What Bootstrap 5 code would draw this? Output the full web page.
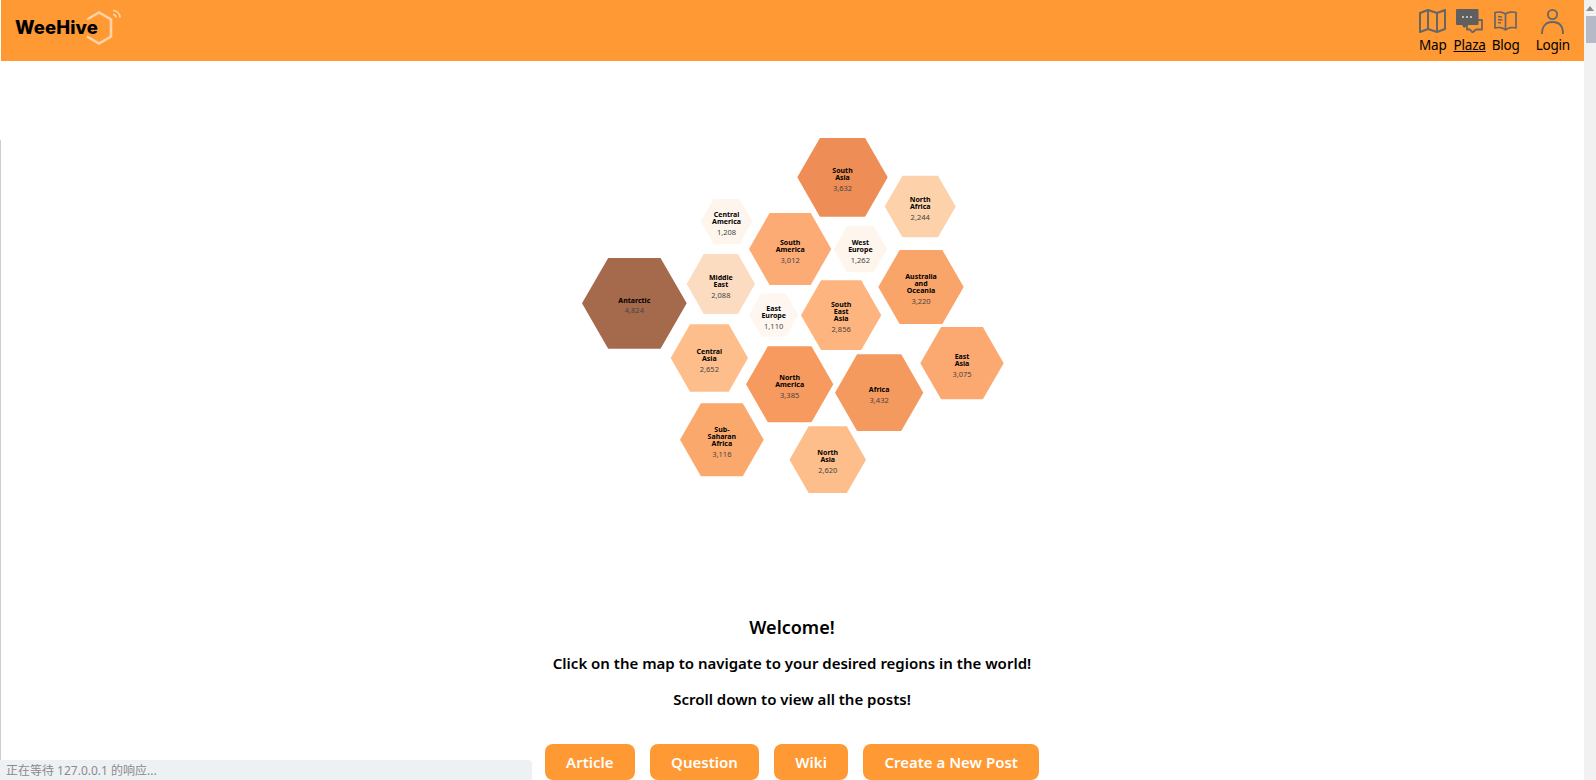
<!DOCTYPE html>
<html lang="en">
  <head>
    <meta charset="UTF-8" />
    <meta name="viewport" content="width=device-width, initial-scale=1.0" />
    <title>WeeHive</title>
    <link href="https://cdn.jsdelivr.net/npm/bootstrap@5.3.0/dist/css/bootstrap.min.css" rel="stylesheet" />
    <style>
      html,
      body {
        height: 100%;
        overflow: hidden;
      }
      body {
        padding-right: 12px;
        font-family: "Noto Sans", sans-serif;
        color: #000;
        background: #fff;
      }
      .top-bar {
        height: 61px;
        background: #ff9933;
        margin-left: 1px;
        padding: 0 14px 0 15px;
      }
      .brand-mark {
        position: relative;
        width: 105px;
        height: 40px;
        margin-top: 8px;
        color: #000;
        text-decoration: none;
      }
      .brand-mark svg {
        position: absolute;
        left: 67px;
        top: 0;
      }
      .brand-name {
        position: absolute;
        left: -1px;
        top: 7px;
        font-family: Inter, sans-serif;
        font-weight: 800;
        font-size: 18.5px;
        line-height: 25px;
        letter-spacing: 0.1px;
      }
      .top-links {
        gap: 7px;
        padding-top: 9px;
      }
      .top-link {
        color: #000;
        text-decoration: none;
        font-size: 13.5px;
        line-height: 19px;
        letter-spacing: -0.2px;
      }
      .top-link svg {
        display: block;
      }
      .top-link.current {
        margin-right: -1px;
      }
      .top-link.current span {
        text-decoration: underline;
      }
      .login-link {
        margin-left: 9px;
      }
      .icon-box {
        height: 27px;
      }
      .hex-map {
        display: block;
        margin: 69px auto 0;
      }
      .hex-name {
        font-family: "Noto Sans", sans-serif;
        font-weight: 700;
        font-size: 7px;
        fill: #000;
        text-anchor: middle;
      }
      .hex-count {
        font-family: "Noto Sans", sans-serif;
        font-size: 7.5px;
        fill: #444;
        text-anchor: middle;
      }
      .intro-title {
        font-size: 18px;
        font-weight: 600;
        line-height: 24px;
        margin: 115px 0 0;
      }
      .intro-line {
        font-size: 15px;
        font-weight: 600;
        line-height: 22px;
        margin: 14px 0 0;
      }
      .intro-title + .intro-line {
        margin-top: 13px;
      }
      .post-actions {
        gap: 14.5px;
        margin-top: 34px;
      }
      .post-btn {
        background: #ff9933;
        border: 0;
        border-radius: 8px;
        color: #fff;
        font-size: 15px;
        font-weight: 600;
        height: 36px;
        padding: 6px 21.5px;
      }
      .load-status {
        position: fixed;
        left: 0;
        bottom: 0;
        width: 532px;
        height: 20px;
        padding: 0 6px;
        background: #eef1f4;
        border-top-right-radius: 4px;
        color: #8a8a8a;
        font-family: "Noto Sans", "Noto Sans CJK SC", sans-serif;
        font-size: 12px;
        line-height: 21px;
      }
      .edge-line {
        position: fixed;
        left: 0;
        top: 140px;
        bottom: 0;
        width: 1px;
        background: #cfcdc8;
      }
      .fake-scroll {
        position: fixed;
        right: 0;
        top: 0;
        bottom: 0;
        width: 12px;
        background: #f1f1f1;
      }
      .fake-scroll i {
        position: absolute;
        left: 2px;
        right: 0;
        top: 16px;
        height: 27px;
        background: #b6bac7;
      }
      .fake-scroll b {
        position: absolute;
        left: 2px;
        top: 6px;
        border: 4px solid transparent;
        border-top: 0;
        border-bottom: 5px solid #8f8f8f;
      }
    </style>
  </head>
  <body>
    <header class="top-bar d-flex justify-content-between align-items-start">
      <a class="brand-mark d-block" href="#">
        <svg width="40" height="40" viewBox="0 0 40 40" fill="none">
          <path d="M4 11.5 16 4.5 28 11.5V28.5L16 35.5 4 28.5" stroke="#ffd3a8" stroke-width="2.6" />
          <path d="M30 6.5a3 3 0 0 1 3 3M30 2.5a7 7 0 0 1 7 7" stroke="#ffd3a8" stroke-width="1.6" />
        </svg>
        <span class="brand-name">WeeHive</span>
      </a>
      <nav class="top-links d-flex">
        <a class="top-link d-flex flex-column align-items-center" href="#">
          <div class="icon-box">
            <svg width="27" height="24" viewBox="0 0 27 24" fill="none" stroke="#666" stroke-width="2" stroke-linejoin="round">
              <path d="M1 4 9 1 18 4 26 1V20L18 23 9 20 1 23Z" />
              <path d="M9 1V20M18 4V23" />
            </svg>
          </div>
          <span>Map</span>
        </a>
        <a class="top-link current d-flex flex-column align-items-center" href="#">
          <div class="icon-box">
            <svg width="27" height="24" viewBox="0 0 27 24" fill="none">
              <path d="M20 11H26V20.5H20L16.5 23.5 14 20.5H11V16" stroke="#666" stroke-width="1.8" stroke-linejoin="round" />
              <path d="M1 0H21.5A1 1 0 0 1 22.5 1V15A1 1 0 0 1 21.5 16H12L8 19 6 16H1A1 1 0 0 1 0 15V1A1 1 0 0 1 1 0Z" fill="#5f5f5f" />
              <circle cx="7" cy="8" r="1" fill="#ddd" />
              <circle cx="11" cy="8" r="1" fill="#ddd" />
              <circle cx="15" cy="8" r="1" fill="#ddd" />
            </svg>
          </div>
          <span>Plaza</span>
        </a>
        <a class="top-link d-flex flex-column align-items-center" href="#">
          <div class="icon-box">
            <svg width="23" height="24" viewBox="0 0 23 24" fill="none" stroke="#666" stroke-width="1.7" stroke-linejoin="round">
              <path d="M11.5 5C9 3 4 2.5 1 3.5V19C4 18 9 18.5 11.5 21 14 18.5 19 18 22 19V3.5C19 2.5 14 3 11.5 5ZM11.5 5V21" />
              <path d="M4 7.5 8 8M4 10.5 8.5 11M4 13.5 7 14" />
            </svg>
          </div>
          <span>Blog</span>
        </a>
        <a class="top-link login-link d-flex flex-column align-items-center" href="#">
          <div class="icon-box">
            <svg width="23" height="26" viewBox="0 0 23 26" fill="none" stroke="#666" stroke-width="1.8">
              <circle cx="11.5" cy="5.5" r="4.6" />
              <path d="M1 25C1 17 5 13 11.5 13S22 17 22 25" />
            </svg>
          </div>
          <span>Login</span>
        </a>
      </nav>
    </header>

    <main class="text-center">
      <svg id="hexMap" class="hex-map" width="440" height="370" viewBox="572 130 440 370"></svg>

      <h1 class="intro-title">Welcome!</h1>
      <p class="intro-line">Click on the map to navigate to your desired regions in the world!</p>
      <p class="intro-line">Scroll down to view all the posts!</p>
      <div class="post-actions d-flex justify-content-center">
        <button type="button" class="btn post-btn">Article</button>
        <button type="button" class="btn post-btn">Question</button>
        <button type="button" class="btn post-btn">Wiki</button>
        <button type="button" class="btn post-btn">Create a New Post</button>
      </div>
    </main>

    <div class="edge-line"></div>
    <div class="load-status">正在等待 127.0.0.1 的响应...</div>
    <div class="fake-scroll"><b></b><i></i></div>

    <script>
      // left, right, top, bottom, colour, name lines, count
      var regions = [
        [797.3, 887.7, 138, 216.7, "#ee8e56", ["South", "Asia"], "3,632"],
        [884.7, 955.7, 175.7, 237.3, "#fdd1a9", ["North", "Africa"], "2,244"],
        [700.7, 752.3, 199, 244, "#fef5ec", ["Central", "America"], "1,208"],
        [749, 831.3, 213, 285, "#fcab74", ["South", "America"], "3,012"],
        [833.7, 887, 226, 272.3, "#fef5ec", ["West", "Europe"], "1,262"],
        [878.3, 963.7, 250, 324, "#f9a468", ["Australia", "and", "Oceania"], "3,220"],
        [686.7, 755, 254, 314, "#fcdcc0", ["Middle", "East"], "2,088"],
        [582, 686.7, 258, 348.7, "#a5694c", ["Antarctic"], "4,824"],
        [749, 798.3, 293.3, 336.7, "#fef7f1", ["East", "Europe"], "1,110"],
        [801, 881.3, 280.3, 350, "#feb47e", ["South", "East", "Asia"], "2,856"],
        [670.7, 748, 324.3, 391.7, "#febe8c", ["Central", "Asia"], "2,652"],
        [746, 833.3, 346.3, 422.3, "#f69a5f", ["North", "America"], "3,385"],
        [835, 923.3, 354.3, 431, "#f59a5e", ["Africa"], "3,432"],
        [920.3, 1003.7, 327, 399.3, "#fba970", ["East", "Asia"], "3,075"],
        [680, 763.7, 403.3, 476.3, "#fba86c", ["Sub-", "Saharan", "Africa"], "3,116"],
        [789.5, 866, 426.3, 493, "#febe8b", ["North", "Asia"], "2,620"],
      ];
      var svgNs = "http://www.w3.org/2000/svg";
      var hexMap = document.getElementById("hexMap");

      regions.forEach(function (r) {
        var cx = (r[0] + r[1]) / 2;
        var cy = (r[2] + r[3]) / 2;
        var inset = (r[1] - r[0]) / 4;
        var hex = document.createElementNS(svgNs, "polygon");
        hex.setAttribute(
          "points",
          [
            [r[0], cy],
            [r[0] + inset, r[2]],
            [r[1] - inset, r[2]],
            [r[1], cy],
            [r[1] - inset, r[3]],
            [r[0] + inset, r[3]],
          ].join(" ")
        );
        hex.setAttribute("fill", r[4]);
        hexMap.appendChild(hex);

        var n = r[5].length;
        r[5].forEach(function (line, i) {
          var t = document.createElementNS(svgNs, "text");
          t.setAttribute("class", "hex-name");
          t.setAttribute("x", cx);
          t.setAttribute("y", cy - (3.5 * n + 0.5) + i * 7 + 3.2);
          t.textContent = line;
          hexMap.appendChild(t);
        });
        var c = document.createElementNS(svgNs, "text");
        c.setAttribute("class", "hex-count");
        c.setAttribute("x", cx);
        c.setAttribute("y", cy + 3.5 * n + 3.5 + 3);
        c.textContent = r[6];
        hexMap.appendChild(c);
      });
    </script>
    <script src="https://cdn.jsdelivr.net/npm/bootstrap@5.3.0/dist/js/bootstrap.bundle.min.js"></script>
  </body>
</html>
